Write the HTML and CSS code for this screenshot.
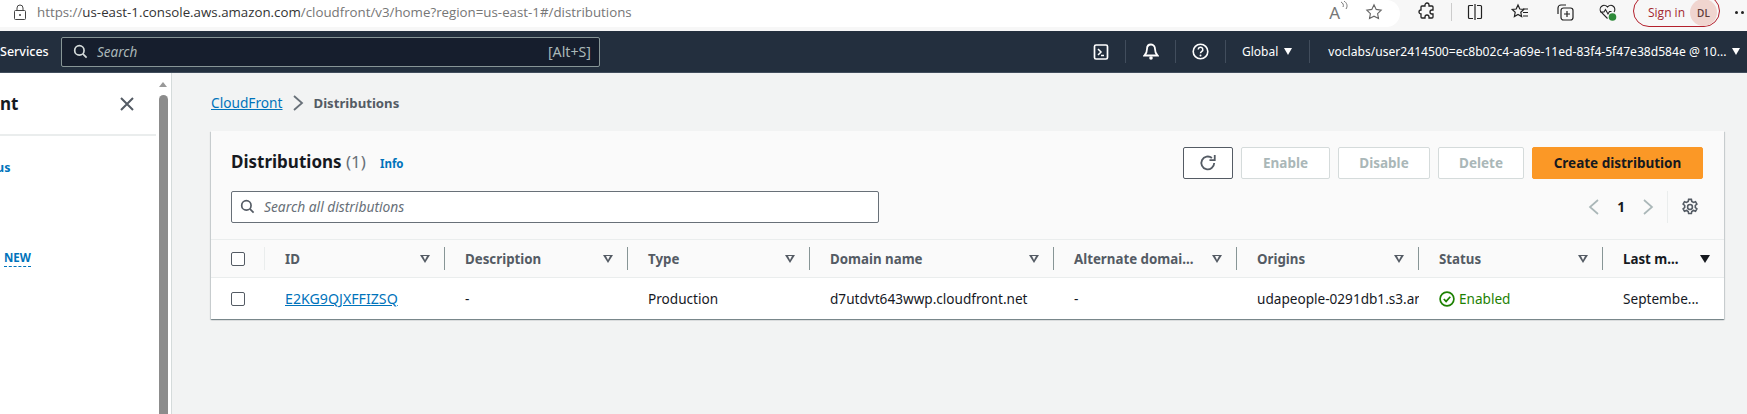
FILE: index.html
```html
<!DOCTYPE html>
<html><head>
<title>Distributions | CloudFront</title>
<link rel="stylesheet" href="styles.css">
</head>
<body>
<div class="toolbar">
	<div class="address">
		<svg class="lock" width="14" height="17" viewBox="0 0 14 17"><path d="M4 7V4a3 3 0 0 1 6 0v3M2.500 6.500h9a1 1 0 0 1 1 1v7a1 1 0 0 1-1 1h-9a1 1 0 0 1-1-1v-7a1 1 0 0 1 1-1z" fill="none" stroke="#444" stroke-width="1"/><circle cx="7" cy="11" r="1" fill="#444"/></svg>
		<span class="url">https://<b>us-east-1.console.aws.amazon.com</b>/cloudfront/v3/home?region=us-east-1#/distributions</span>
		<span class="read">A<svg width="8" height="10" viewBox="0 0 8 10"><path d="M1 1c2 1 3 3 2 5M4 0c3 2 4 5 2 8" fill="none" stroke="#777"/></svg></span>
		<svg class="star" width="18" height="18" viewBox="0 0 18 18"><path d="M9 1.800l2.200 4.600 5 .7-3.600 3.500.9 5L9 13.200l-4.500 2.400.9-5L1.800 7.100l5-.7z" fill="none" stroke="#666" stroke-width="1.100"/></svg>
	</div>
	<div class="tools">
		<svg class="t-puzzle" width="20" height="20" viewBox="0 0 20 20"><path d="M8 3a2 2 0 0 1 4 0v1h3a1 1 0 0 1 1 1v3h-1a2 2 0 0 0 0 4h1v3a1 1 0 0 1-1 1h-3v-1a2 2 0 0 0-4 0v1H5a1 1 0 0 1-1-1v-3a2 2 0 0 1 0-4V5a1 1 0 0 1 1-1h3z" fill="none" stroke="#222" stroke-width="1.300"/></svg>
		<i class="t-sep"></i>
		<svg class="t-split" width="18" height="18" viewBox="0 0 18 18"><path d="M7 2.500H3.500a1 1 0 0 0-1 1v11a1 1 0 0 0 1 1H7M11 2.500h3.500a1 1 0 0 1 1 1v11a1 1 0 0 1-1 1H11M9 1v16" fill="none" stroke="#222" stroke-width="1.200"/></svg>
		<svg class="t-fav" width="20" height="18" viewBox="0 0 20 18"><path d="M8 2l1.800 4 4 .5-3 2.800.8 4.200L8 11.500 4.400 13.500l.8-4.200-3-2.800 4-.5zM13 6h5M13 9.500h5M13 13h5" fill="none" stroke="#222" stroke-width="1.200"/></svg>
		<svg class="t-coll" width="20" height="20" viewBox="0 0 20 20"><path d="M3 12V6a3 3 0 0 1 3-3h5" fill="none" stroke="#222" stroke-width="1.200"/><rect x="6" y="6" width="12" height="12" rx="2.500" fill="none" stroke="#222" stroke-width="1.200"/><path d="M12 9v6M9 12h6" stroke="#222" stroke-width="1.200"/></svg>
		<svg class="t-heart" width="20" height="20" viewBox="0 0 20 20"><path d="M9.500 16.500L3 10a4 4 0 0 1 6.500-5A4 4 0 0 1 16 10M2 10h4l1.500-2.500L10 12l1.500-2.500h2" fill="none" stroke="#222" stroke-width="1.100"/><circle cx="14.500" cy="15" r="3.800" fill="#2e8b3a"/></svg>
		<div class="signin">Sign in <span class="avatar">DL</span></div>
		<span class="more"><i></i><i></i></span>
	</div>
</div>

<div class="topnav">
	<span class="services">Services</span>
	<div class="navsearch">
		<svg width="15" height="15" viewBox="0 0 16 16"><circle cx="6.800" cy="6.800" r="5" fill="none" stroke="#d5dbdb" stroke-width="1.800"/><path d="M10.500 10.500l4 4" stroke="#d5dbdb" stroke-width="1.800"/></svg>
		<em>Search</em>
		<span>[Alt+S]</span>
	</div>
	<div class="navright">
		<span class="navicon"><svg width="16" height="16" viewBox="0 0 16 16"><rect x="1.500" y="1" width="13" height="14" rx="1.500" fill="none" stroke="#fff" stroke-width="1.700"/><path d="M5 5l3 3-3 3M8 11.500h3" fill="none" stroke="#fff" stroke-width="1.500"/></svg></span>
		<i class="navsep"></i>
		<span class="navicon"><svg width="16" height="18" viewBox="0 0 16 18"><path d="M8 1.500c-2.500 0-4 2-4 4.500 0 3-1 5-2.500 6.500h13C13 11 12 9 12 6c0-2.500-1.500-4.500-4-4.500z" fill="none" stroke="#fff" stroke-width="1.800"/><circle cx="8" cy="15" r="1.800" fill="#fff"/></svg></span>
		<i class="navsep"></i>
		<span class="navicon"><svg width="17" height="17" viewBox="0 0 17 17"><circle cx="8.500" cy="8.500" r="7.300" fill="none" stroke="#fff" stroke-width="1.600"/><path d="M6.200 6.600a2.300 2.300 0 1 1 3.400 2c-.8.500-1.100.9-1.100 1.700" fill="none" stroke="#fff" stroke-width="1.500"/><circle cx="8.500" cy="12.500" r="1" fill="#fff"/></svg></span>
		<i class="navsep"></i>
		<span class="region">Global <u class="caret"></u></span>
		<i class="navsep"></i>
		<span class="account">voclabs/user2414500=ec8b02c4-a69e-11ed-83f4-5f47e38d584e @ 10...</span>
		<u class="caret"></u>
	</div>
</div>

<div class="content">
	<div class="sidebar">
		<div class="side-head">
			<span class="side-title">nt</span>
			<svg width="16" height="16" viewBox="0 0 16 16"><path d="M2 2l12 12M14 2L2 14" stroke="#545b64" stroke-width="2"/></svg>
		</div>
		<div class="side-link">us</div>
		<div class="side-new">NEW</div>
	</div>
	<div class="scrollbar">
		<div class="arrow"></div>
		<div class="thumb"></div>
	</div>
	<div class="main">
		<div class="crumbs">
			<a href="#">CloudFront</a>
			<svg width="12" height="18" viewBox="0 0 12 18"><path d="M2 2l8 7-8 7" fill="none" stroke="#687078" stroke-width="1.800"/></svg>
			<b>Distributions</b>
		</div>
		<div class="card">
			<div class="card-top">
				<div class="title-row">
					<h1>Distributions <span>(1)</span></h1>
					<a class="info" href="#">Info</a>
					<div class="actions">
						<button class="btn refresh"><svg width="18" height="18" viewBox="0 0 16 16"><path d="M13.500 8a5.700 5.700 0 1 1-2-4.400" fill="none" stroke="#545b64" stroke-width="1.600"/><path d="M14 .8v4.700H9.300" fill="none" stroke="#545b64" stroke-width="1.600"/></svg></button>
						<button class="btn off w-enable">Enable</button>
						<button class="btn off w-disable">Disable</button>
						<button class="btn off w-delete">Delete</button>
						<button class="btn primary">Create distribution</button>
					</div>
				</div>
				<div class="filter-row">
					<div class="filter">
						<svg width="15" height="15" viewBox="0 0 16 16"><circle cx="6.800" cy="6.800" r="5" fill="none" stroke="#545b64" stroke-width="1.800"/><path d="M10.500 10.500l4 4" stroke="#545b64" stroke-width="1.800"/></svg>
						<em>Search all distributions</em>
					</div>
					<div class="pager">
						<svg width="12" height="18" viewBox="0 0 12 18"><path d="M10 2L2 9l8 7" fill="none" stroke="#aab7b8" stroke-width="1.700"/></svg>
						<b>1</b>
						<svg width="12" height="18" viewBox="0 0 12 18"><path d="M2 2l8 7-8 7" fill="none" stroke="#aab7b8" stroke-width="1.700"/></svg>
						<i></i>
						<svg class="gear" width="18" height="18" viewBox="0 0 17 17"><path d="M7.200 1.300h2.600l.4 2 1.600.9 1.900-.7 1.300 2.300-1.500 1.300v1.800l1.500 1.300-1.300 2.300-1.900-.7-1.600.9-.4 2H7.200l-.4-2-1.600-.9-1.900.7L2 10.200l1.500-1.300V7.100L2 5.800l1.300-2.300 1.900.7 1.600-.9z" fill="none" stroke="#545b64" stroke-width="1.500"/><circle cx="8.500" cy="8.500" r="2.300" fill="none" stroke="#545b64" stroke-width="1.500"/></svg>
					</div>
				</div>
			</div>
			<div class="grid head">
				<div class="check-cell first"><span class="check"></span></div>
				<div class="th">ID<u class="sort"></u></div>
				<div class="th">Description<u class="sort"></u></div>
				<div class="th">Type<u class="sort"></u></div>
				<div class="th">Domain name<u class="sort"></u></div>
				<div class="th">Alternate domai...<u class="sort"></u></div>
				<div class="th">Origins<u class="sort"></u></div>
				<div class="th">Status<u class="sort"></u></div>
				<div class="th last">Last m...<u class="sort on"></u></div>
			</div>
			<div class="grid row">
				<div class="check-cell"><span class="check"></span></div>
				<div class="td"><a href="#">E2KG9QJXFFIZSQ</a></div>
				<div class="td">-</div>
				<div class="td">Production</div>
				<div class="td">d7utdvt643wwp.cloudfront.net</div>
				<div class="td">-</div>
				<div class="td">udapeople-0291db1.s3.ar</div>
				<div class="td enabled"><svg width="16" height="16" viewBox="0 0 16 16"><circle cx="8" cy="8" r="6.900" fill="none" stroke="#1d8102" stroke-width="1.700"/><path d="M4.800 8l2.300 2.400 4.200-4.600" fill="none" stroke="#1d8102" stroke-width="1.700"/></svg>Enabled</div>
				<div class="td">Septembe...</div>
			</div>
		</div>
	</div>
</div>
</body></html>
```

FILE: styles.css
```css
html,body{margin:0;padding:0;height:414px;overflow:hidden;background:#f2f3f3;}
body{font-family:"Noto Sans",sans-serif;font-size:14px;color:#16191f;}
a{color:#0073bb;}
button{font-family:inherit;}
u{text-decoration:none;}

/* browser chrome */
.toolbar{display:flex;height:31px;background:#f7f7f7;overflow:hidden;}
.address{display:flex;align-items:center;width:1400px;height:27px;box-sizing:border-box;padding:0 0 3px 13px;background:#fff;border-radius:0 14px 14px 0;}
.url{margin-left:10px;font-size:13.300px;color:#767676;white-space:nowrap;font-family:"Open Sans",sans-serif;}
.url b{font-weight:400;color:#333;}
.read{margin-left:auto;font-size:17px;color:#777;display:flex;}
.star{margin:0 17px 0 17px;}
.tools{display:flex;align-items:center;height:24px;flex:1;}
.tools svg{flex:none;}
.t-puzzle{margin-left:17px;}
.t-sep{width:1px;height:18px;background:#ccc;margin:0 14px;}
.t-fav{margin-left:26px;}
.t-coll{margin-left:25px;}
.t-heart{margin-left:23px;}
.signin{display:flex;align-items:center;justify-content:space-between;flex:none;box-sizing:border-box;margin-left:15px;width:87px;height:32px;margin-top:-3px;padding:4px 2px 0 14px;border:1px solid #b3202c;border-radius:16px;color:#a3262f;font-size:12px;font-family:"Open Sans",sans-serif;white-space:nowrap;}
.avatar{display:flex;align-items:center;justify-content:center;width:27px;height:27px;border-radius:50%;background:#f0d5cf;color:#5c3b37;font-size:10px;font-weight:600;}
.more{display:flex;gap:3px;margin-left:15px;}
.more i{width:3px;height:3px;border-radius:50%;background:#222;}

/* aws nav */
.topnav{display:flex;align-items:center;height:41px;background:#232f3e;color:#fff;font-size:13px;border-bottom:1px solid #414d5c;}
.services{width:61px;font-weight:500;font-size:12.500px;white-space:nowrap;}
.navsearch{display:flex;align-items:center;box-sizing:border-box;width:539px;height:30px;padding:0 8px 0 11px;background:#161e2d;border:1px solid #879596;border-radius:2px;color:#aab7b8;}
.navsearch em{margin-left:9px;font-size:13.500px;}
.navsearch span{margin-left:auto;font-size:14.200px;}
.navright{display:flex;align-items:center;flex:1;font-size:12px;}
.navicon{display:flex;justify-content:center;width:25px;}
.navicon:first-child{margin-left:488px;}
.navsep{width:1px;height:23px;background:#414d5c;margin:0 12px;}
.region{display:flex;align-items:center;gap:6px;margin-left:4px;margin-right:5px;white-space:nowrap;}
.account{white-space:nowrap;margin-left:6px;margin-right:5px;font-size:12.100px;}
.caret{display:inline-block;border-left:4.500px solid transparent;border-right:4.500px solid transparent;border-top:7px solid #fff;}

.content{display:flex;height:341px;}

/* left panel */
.sidebar{width:159px;background:#fff;flex:none;overflow:hidden;}
.side-head{display:flex;align-items:center;justify-content:space-between;box-sizing:border-box;width:156px;height:63px;padding:0 21px 0 0;border-bottom:2px solid #eaeded;}
.side-title{font-size:17px;font-weight:700;}
.side-link{margin:23px 0 0 -4px;font-size:12.500px;font-weight:700;color:#0073bb;}
.side-new{display:inline-block;margin:74px 0 0 4px;font-size:11.500px;font-weight:700;line-height:16px;color:#0073bb;border-bottom:1px dashed #0073bb;}
.scrollbar{flex:none;width:12px;background:#fff;border-right:1px solid #d5dbdb;overflow:hidden;}
.arrow{width:0;margin-top:9px;border-left:4.500px solid transparent;border-right:4.500px solid transparent;border-bottom:5px solid #999;}
.thumb{width:9px;height:340px;margin-top:8px;background:#8c8c8c;border-radius:5px 5px 0 0;}

/* main */
.main{flex:1;padding:0 23px 0 39px;}
.crumbs{display:flex;align-items:center;gap:9px;height:58px;padding-top:1px;box-sizing:border-box;}
.crumbs a{font-size:13.700px;}
.crumbs b{font-weight:700;color:#545b64;font-size:13.200px;margin-left:1px;}
.card{background:#fff;box-shadow:0 1px 1px 0 rgba(0,28,36,.35),1px 1px 1px 0 rgba(0,28,36,.12),-1px 1px 1px 0 rgba(0,28,36,.12);}
.card-top{padding:16px 21px 16px 20px;background:#fafafa;border-bottom:1px solid #eaeded;}
.title-row{display:flex;align-items:center;height:32px;}
h1{margin:-3px 0 0;font-size:17px;font-weight:700;}
h1 span{font-weight:400;color:#687078;}
.info{margin:0 0 0 14px;font-size:11.500px;font-weight:700;text-decoration:none;}
.actions{display:flex;gap:8px;margin-left:auto;}
.btn{height:32px;box-sizing:border-box;padding:0;font-size:13.500px;font-weight:700;border-radius:2px;background:#fff;border:1px solid #545b64;}
.refresh{display:flex;align-items:center;justify-content:center;width:50px;}
.off{color:#aab7b8;border-color:#d5dbdb;}
.w-enable{width:89px;}
.w-disable{width:92px;}
.w-delete{width:86px;}
.primary{width:171px;background:#fb9826;border-color:#fb9826;color:#16191f;}
.filter-row{display:flex;align-items:center;margin-top:12px;}
.filter{display:flex;align-items:center;box-sizing:border-box;width:648px;height:32px;padding:0 0 1px 8px;background:#fff;border:1px solid #687078;border-radius:2px;}
.filter em{margin-left:9px;font-size:13.800px;color:#687078;}
.pager{display:flex;align-items:center;height:32px;margin-left:auto;margin-right:4px;}
.pager b{width:16px;margin:0 13px;text-align:center;font-size:13.500px;font-weight:700;}
.pager i{width:1px;height:32px;background:#eaeded;margin:0 13px;}

/* table */
.grid{display:grid;grid-template-columns:54px 180px 183px 182px 244px 183px 182px 184px 121px;}
.head{height:38px;background:#fafafa;border-bottom:1px solid #eaeded;box-sizing:border-box;}
.row{height:41px;}
.check-cell{display:flex;align-items:center;padding-left:20px;}
.check{width:14px;height:14px;box-sizing:border-box;background:#fff;border:1px solid #545b64;border-radius:2px;}
.th{display:flex;align-items:center;justify-content:space-between;box-sizing:border-box;padding:0 14px 0 20px;margin:7px 0;color:#545b64;font-size:13.300px;font-weight:700;border-right:1px solid #879596;white-space:nowrap;}
.th.last{border-right:0;color:#16191f;}
.first{border-right:1px solid #eaeded;margin:7px 0;}
.sort{width:0;height:0;border-left:5px solid transparent;border-right:5px solid transparent;border-top:8px solid #545b64;position:relative;}
.sort:after{content:"";position:absolute;left:-2.500px;top:-6.500px;border-left:2.500px solid transparent;border-right:2.500px solid transparent;border-top:4px solid #fafafa;}
.sort.on{border-top-color:#16191f;}
.sort.on:after{display:none;}
.td{display:flex;align-items:center;padding-left:20px;font-size:13.600px;white-space:nowrap;overflow:hidden;}
.td a{font-size:14.200px;}
.enabled{gap:4px;color:#1d8102;}
.enabled svg{flex:none;}
```
